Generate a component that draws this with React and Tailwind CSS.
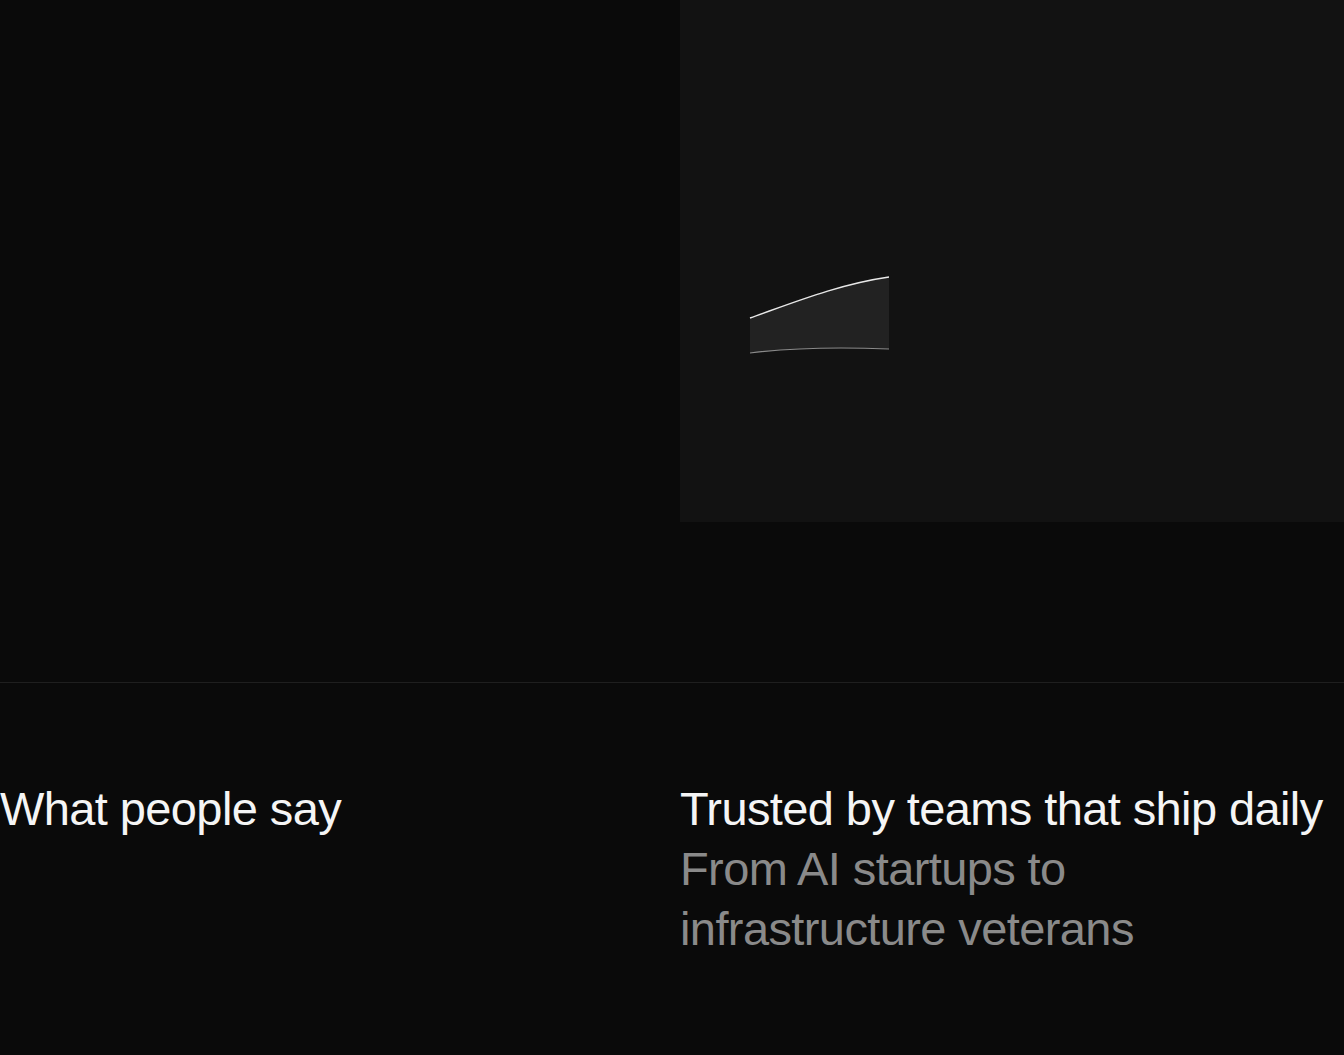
export default function App() {
  return (
    <div className="min-h-screen w-full bg-[#0a0a0a] font-['Liberation_Sans',Arial,sans-serif] text-[#f5f5f5] overflow-hidden">
      {/* top feature row */}
      <div className="grid grid-cols-2 gap-4">
        <div />
        <div className="h-[522px] bg-[#121212]">
          <svg width="664" height="522" viewBox="0 0 664 522" className="block">
            <path
              d="M70 318 C 115 302, 160 284, 209 277 L 209 349 C 160 347, 110 348, 70 353 Z"
              fill="#222222"
            />
            <path d="M70 318 C 115 302, 160 284, 209 277" fill="none" stroke="#e8e8e8" strokeWidth="1.5" />
            <path d="M70 353 C 110 348, 160 347, 209 349" fill="none" stroke="#8a8a8a" strokeWidth="1.2" />
          </svg>
        </div>
      </div>

      {/* testimonials header */}
      <div className="mt-[160px] border-t border-[#1f1f1f]">
        <div className="grid grid-cols-2 gap-4 pt-[96px]">
          <h2 className="text-[47px] leading-[60px] tracking-[-0.6px]">What people say</h2>
          <div className="text-[47px] leading-[60px] tracking-[-0.6px]">
            <p>Trusted by teams that ship daily</p>
            <p className="text-[#8a8a8a] max-w-[490px]">From AI startups to infrastructure veterans</p>
          </div>
        </div>
      </div>
    </div>
  );
}
